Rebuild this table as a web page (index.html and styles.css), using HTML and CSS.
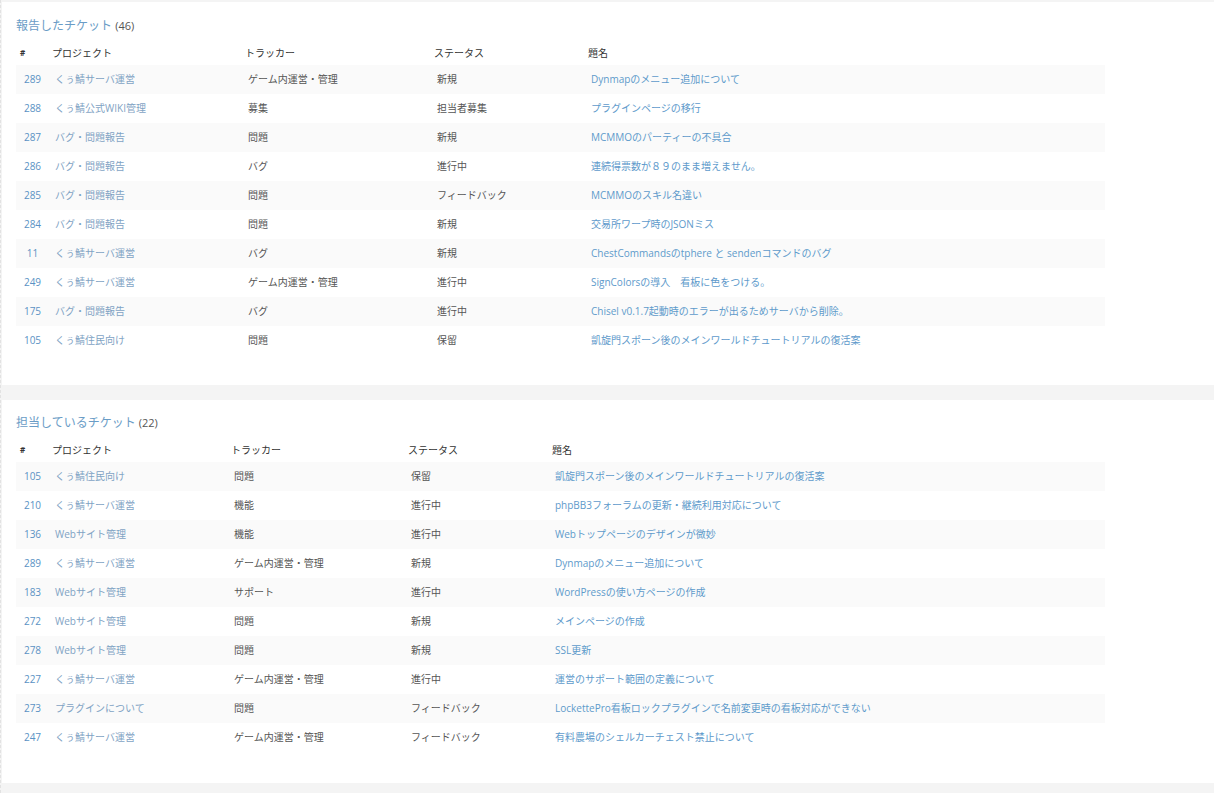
FILE: index.html
```html
<!DOCTYPE html>
<html lang="ja">
<head>
<meta charset="utf-8">
<title>マイページ</title>
<link rel="stylesheet" href="styles.css">
</head>
<body>
<div class="page">
  <section class="box">
    <h3 class="box-title"><a href="#">報告したチケット</a> <span class="count">(46)</span></h3>
    <table class="list t1">
      <colgroup><col class="c-id"><col class="c-proj"><col class="c-trk"><col class="c-st"><col class="c-sub"></colgroup>
      <thead><tr><th class="h-id">#</th><th>プロジェクト</th><th>トラッカー</th><th>ステータス</th><th>題名</th></tr></thead>
      <tbody>
        <tr><td class="id"><a href="#">289</a></td><td class="proj"><a href="#">くぅ鯖サーバ運営</a></td><td>ゲーム内運営・管理</td><td>新規</td><td class="sub"><a href="#">Dynmapのメニュー追加について</a></td></tr>
        <tr><td class="id"><a href="#">288</a></td><td class="proj"><a href="#">くぅ鯖公式WIKI管理</a></td><td>募集</td><td>担当者募集</td><td class="sub"><a href="#">プラグインページの移行</a></td></tr>
        <tr><td class="id"><a href="#">287</a></td><td class="proj"><a href="#">バグ・問題報告</a></td><td>問題</td><td>新規</td><td class="sub"><a href="#">MCMMOのパーティーの不具合</a></td></tr>
        <tr><td class="id"><a href="#">286</a></td><td class="proj"><a href="#">バグ・問題報告</a></td><td>バグ</td><td>進行中</td><td class="sub"><a href="#">連続得票数が８９のまま増えません。</a></td></tr>
        <tr><td class="id"><a href="#">285</a></td><td class="proj"><a href="#">バグ・問題報告</a></td><td>問題</td><td>フィードバック</td><td class="sub"><a href="#">MCMMOのスキル名違い</a></td></tr>
        <tr><td class="id"><a href="#">284</a></td><td class="proj"><a href="#">バグ・問題報告</a></td><td>問題</td><td>新規</td><td class="sub"><a href="#">交易所ワープ時のJSONミス</a></td></tr>
        <tr><td class="id"><a href="#">11</a></td><td class="proj"><a href="#">くぅ鯖サーバ運営</a></td><td>バグ</td><td>新規</td><td class="sub"><a href="#">ChestCommandsのtphere と sendenコマンドのバグ</a></td></tr>
        <tr><td class="id"><a href="#">249</a></td><td class="proj"><a href="#">くぅ鯖サーバ運営</a></td><td>ゲーム内運営・管理</td><td>進行中</td><td class="sub"><a href="#">SignColorsの導入　看板に色をつける。</a></td></tr>
        <tr><td class="id"><a href="#">175</a></td><td class="proj"><a href="#">バグ・問題報告</a></td><td>バグ</td><td>進行中</td><td class="sub"><a href="#">Chisel v0.1.7起動時のエラーが出るためサーバから削除。</a></td></tr>
        <tr><td class="id"><a href="#">105</a></td><td class="proj"><a href="#">くぅ鯖住民向け</a></td><td>問題</td><td>保留</td><td class="sub"><a href="#">凱旋門スポーン後のメインワールドチュートリアルの復活案</a></td></tr>
      </tbody>
    </table>
  </section>

  <section class="box second">
    <h3 class="box-title"><a href="#">担当しているチケット</a> <span class="count">(22)</span></h3>
    <table class="list t2">
      <colgroup><col class="c-id"><col class="c-proj"><col class="c-trk"><col class="c-st"><col class="c-sub"></colgroup>
      <thead><tr><th class="h-id">#</th><th>プロジェクト</th><th>トラッカー</th><th>ステータス</th><th>題名</th></tr></thead>
      <tbody>
        <tr><td class="id"><a href="#">105</a></td><td class="proj"><a href="#">くぅ鯖住民向け</a></td><td>問題</td><td>保留</td><td class="sub"><a href="#">凱旋門スポーン後のメインワールドチュートリアルの復活案</a></td></tr>
        <tr><td class="id"><a href="#">210</a></td><td class="proj"><a href="#">くぅ鯖サーバ運営</a></td><td>機能</td><td>進行中</td><td class="sub"><a href="#">phpBB3フォーラムの更新・継続利用対応について</a></td></tr>
        <tr><td class="id"><a href="#">136</a></td><td class="proj"><a href="#">Webサイト管理</a></td><td>機能</td><td>進行中</td><td class="sub"><a href="#">Webトップページのデザインが微妙</a></td></tr>
        <tr><td class="id"><a href="#">289</a></td><td class="proj"><a href="#">くぅ鯖サーバ運営</a></td><td>ゲーム内運営・管理</td><td>新規</td><td class="sub"><a href="#">Dynmapのメニュー追加について</a></td></tr>
        <tr><td class="id"><a href="#">183</a></td><td class="proj"><a href="#">Webサイト管理</a></td><td>サポート</td><td>進行中</td><td class="sub"><a href="#">WordPressの使い方ページの作成</a></td></tr>
        <tr><td class="id"><a href="#">272</a></td><td class="proj"><a href="#">Webサイト管理</a></td><td>問題</td><td>新規</td><td class="sub"><a href="#">メインページの作成</a></td></tr>
        <tr><td class="id"><a href="#">278</a></td><td class="proj"><a href="#">Webサイト管理</a></td><td>問題</td><td>新規</td><td class="sub"><a href="#">SSL更新</a></td></tr>
        <tr><td class="id"><a href="#">227</a></td><td class="proj"><a href="#">くぅ鯖サーバ運営</a></td><td>ゲーム内運営・管理</td><td>進行中</td><td class="sub"><a href="#">運営のサポート範囲の定義について</a></td></tr>
        <tr><td class="id"><a href="#">273</a></td><td class="proj"><a href="#">プラグインについて</a></td><td>問題</td><td>フィードバック</td><td class="sub"><a href="#">LockettePro看板ロックプラグインで名前変更時の看板対応ができない</a></td></tr>
        <tr><td class="id"><a href="#">247</a></td><td class="proj"><a href="#">くぅ鯖サーバ運営</a></td><td>ゲーム内運営・管理</td><td>フィードバック</td><td class="sub"><a href="#">有料農場のシェルカーチェスト禁止について</a></td></tr>
      </tbody>
    </table>
  </section>
</div>
</body>
</html>
```

FILE: styles.css
```css
html, body {
  margin: 0;
  padding: 0;
}

body {
  background: #f4f4f4;
  font-family: "Open Sans", "Noto Sans CJK JP", sans-serif;
  font-size: 10px;
  color: #555;
}

.page {
  padding: 2px 0 0 1px;
  border-left: 1px dashed #e2e2e2;
  min-height: 793px;
  box-sizing: border-box;
}

.box {
  background: #fff;
  padding: 16px 14px 30px 14px;
}

.box.second {
  margin-top: 15px;
  padding-top: 15px;
  padding-bottom: 31px;
}

a {
  color: #5b96c8;
  text-decoration: none;
}

.box-title {
  margin: 0 0 7px 0;
  font-size: 12px;
  line-height: 16px;
  font-weight: normal;
}

.box-title a {
  color: #6a9cc6;
}

.box-title .count {
  font-size: 11px;
  color: #555;
}

.list {
  border-collapse: collapse;
  table-layout: fixed;
  width: 1089px;
}

.list th {
  text-align: left;
  font-weight: normal;
  color: #333;
  font-size: 10px;
  line-height: 14px;
  padding: 5px 4px;
  white-space: nowrap;
}

.list th.h-id {
  font-weight: bold;
  font-size: 8px;
}

.list td {
  font-size: 10px;
  line-height: 15px;
  padding: 7px 4px 7px 7px;
  white-space: nowrap;
  overflow: hidden;
  color: #555;
}

.list tbody tr:nth-child(odd) {
  background: #fafafa;
}

.list td.id {
  text-align: center;
  padding-left: 1px;
  padding-right: 0;
}

.list td.id a {
  color: #5a92c4;
}

.list td.proj {
  padding-left: 7px;
}

.list td.proj a {
  color: #7fa3c4;
}

.list td.sub a {
  color: #5e9acb;
}

.t1 .c-id { width: 32px; }
.t1 .c-proj { width: 193px; }
.t1 .c-trk { width: 189px; }
.t1 .c-st { width: 154px; }
.t1 .c-sub { width: 521px; }

.t2 .c-id { width: 32px; }
.t2 .c-proj { width: 179px; }
.t2 .c-trk { width: 177px; }
.t2 .c-st { width: 144px; }
.t2 .c-sub { width: 557px; }
```
